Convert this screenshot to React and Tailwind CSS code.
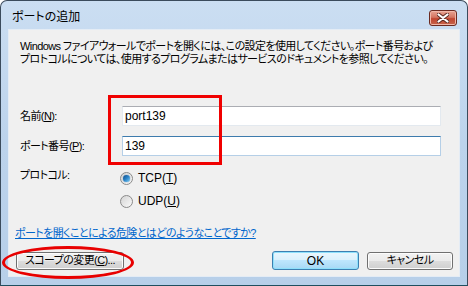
import React from 'react';

const font = "font-['Liberation_Sans','Noto_Sans_CJK_JP',sans-serif] [font-feature-settings:'palt']";
const jp = 'text-[11px] tracking-[-0.6px] leading-[13px] whitespace-nowrap';

function Radio({ checked, label, mnemonic }) {
    return (
        <div className="flex h-[13px] items-center gap-[5px]">
            <span className="relative flex h-[13px] w-[13px] items-center justify-center rounded-full border border-[#8a8a8a] bg-gradient-to-br from-[#d4d4d4] to-[#fafafa]">
                {checked && (
                    <span className="h-[7px] w-[7px] rounded-full bg-gradient-to-br from-[#0f4d8a] via-[#2b84c8] to-[#7fd0f5] shadow-[0_0_1px_#1a5d9c]" />
                )}
            </span>
            <span className="text-[12px] leading-[13px]">
                {label}(<span className="underline">{mnemonic}</span>)
            </span>
        </div>
    );
}

function Button({ children, focused, className = '' }) {
    return (
        <div
            className={
                'flex items-center justify-center rounded-[3px] border leading-none whitespace-nowrap ' +
                (focused
                    ? 'border-[#3c7fb1] bg-[linear-gradient(#eaf6fd_0%,#d9f0fc_50%,#bee6fd_50%,#a7d9f5_100%)] shadow-[inset_0_0_0_1px_#8ee0fb] '
                    : 'border-[#707070] bg-[linear-gradient(#f2f2f2_0%,#ebebeb_50%,#dddddd_50%,#cfcfcf_100%)] shadow-[inset_0_0_0_1px_#fcfcfc] ') +
                className
            }
        >
            {children}
        </div>
    );
}

export default function App() {
    return (
        <div className={'relative h-[286px] w-[468px] overflow-hidden bg-white text-black ' + font}>
            <div className="flex h-full w-full flex-col rounded-t-[7px] border border-[#3b4b5c] border-b-[#1f4f5f] bg-gradient-to-b from-[#cbdef2] via-[#bcd3ec] to-[#b7cfe9]">
                {/* Title bar */}
                <div className="relative flex h-[28px] shrink-0 items-start">
                    <span className="pl-[11px] pt-[10px] text-[12px] leading-[13px] text-black">ポートの追加</span>
                    <div className="absolute right-[10px] top-[9px] flex h-[16px] w-[28px] items-center justify-center rounded-[3px] border border-[#6b2a20] bg-[linear-gradient(#e8a493_0%,#d47561_45%,#c0452f_55%,#c6654c_100%)] shadow-[inset_0_0_0_1px_#f0b7a8]">
                        <svg width="12" height="10" viewBox="0 0 12 10">
                            <path d="M1.5 1.5 L10.5 8.5 M10.5 1.5 L1.5 8.5" stroke="#5a2a22" strokeWidth="4" strokeLinecap="round" />
                            <path d="M1.5 1.5 L10.5 8.5 M10.5 1.5 L1.5 8.5" stroke="#ffffff" strokeWidth="2.2" strokeLinecap="round" />
                        </svg>
                    </div>
                </div>

                {/* Client area */}
                <div className="mx-[7px] flex h-[248px] shrink-0 flex-col border border-[#e4ecf5] bg-[#f0f0f0]">
                    <p className={'px-[11px] pt-[10px] ' + jp}>
                        Windows ファイアウォールでポートを開くには、この設定を使用してください。ポート番号および
                        <br />
                        プロトコルについては、使用するプログラムまたはサービスのドキュメントを参照してください。
                    </p>

                    <div className="mt-[40px] flex flex-col gap-[10px] pl-[11px]">
                        <div className="flex items-center">
                            <span className={'w-[102px] ' + jp}>
                                名前(<span className="underline">N</span>):
                            </span>
                            <div className="flex h-[20px] w-[319px] items-center border border-[#e3e9ef] border-t-[#abadb3] bg-white pl-[2px] text-[12px]">
                                port139
                            </div>
                        </div>
                        <div className="flex items-center">
                            <span className={'w-[102px] ' + jp}>
                                ポート番号(<span className="underline">P</span>):
                            </span>
                            <div className="flex h-[20px] w-[319px] items-center border border-[#b5cfe7] border-t-[#3d7bad] bg-white pl-[2px] text-[12px]">
                                139
                            </div>
                        </div>
                        <div className="mt-[3px] flex items-start">
                            <span className={'w-[100px] ' + jp}>プロトコル:</span>
                            <div className="mt-[3px] flex flex-col gap-[10px]">
                                <Radio checked label="TCP" mnemonic="T" />
                                <Radio label="UDP" mnemonic="U" />
                            </div>
                        </div>
                    </div>

                    <a className={'mt-[19px] self-start pl-[6px] text-[#0066cc] underline ' + jp}>
                        ポートを開くことによる危険とはどのようなことですか?
                    </a>

                    <div className="mt-[11px] flex items-center pl-[7px]">
                        <Button className={'h-[18px] w-[108px] ' + jp}>
                            スコープの変更(<span className="underline">C</span>)...
                        </Button>
                        <Button focused className="ml-[148px] h-[19px] w-[87px] text-[12px]">
                            OK
                        </Button>
                        <Button className={'ml-[8px] h-[18px] w-[86px] ' + jp}>キャンセル</Button>
                    </div>
                </div>
            </div>

            {/* Red annotations */}
            <div className="pointer-events-none absolute left-[108px] top-[95px] h-[70px] w-[114px] border-[3px] border-[#f00000]" />
            <div className="pointer-events-none absolute left-[2px] top-[246px] h-[33px] w-[132px] rounded-[50%] border-[3px] border-[#e80000]" />
        </div>
    );
}
